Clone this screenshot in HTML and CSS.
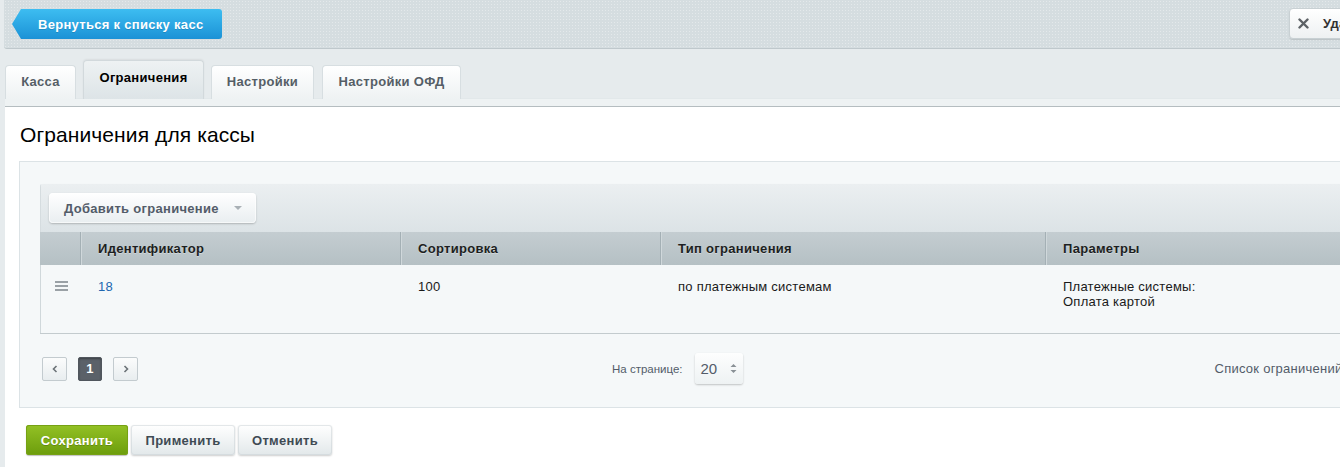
FILE: index.html
```html
<!DOCTYPE html>
<html lang="ru">
<head>
<meta charset="utf-8">
<title>Ограничения для кассы</title>
<link rel="stylesheet" href="styles.css">
</head>
<body>
<div class="page">
  <div class="topbar">
    <a class="back-btn" href="#">Вернуться к списку касс</a>
    <a class="del-btn" href="#"><span class="del-x">
      <svg width="11" height="11" viewBox="0 0 11 11"><path d="M1.5 1.5 L9.5 9.5 M9.5 1.5 L1.5 9.5" stroke="#5d6266" stroke-width="2.4" stroke-linecap="round"/></svg>
    </span>Удалить</a>
  </div>

  <div class="tabs">
    <div class="tab t1">Касса</div>
    <div class="tab tab-active t2">Ограничения</div>
    <div class="tab t3">Настройки</div>
    <div class="tab t4">Настройки ОФД</div>
  </div>
  <div class="tab-strip"></div>

  <div class="panel">
    <h1 class="title">Ограничения для кассы</h1>
    <div class="box">
      <div class="grid">
        <div class="grid-toolbar">
          <button class="add-btn">Добавить ограничение <span class="caret"></span></button>
        </div>
        <div class="grid-head">
          <div class="cell c0"></div>
          <div class="cell c1">Идентификатор</div>
          <div class="cell c2">Сортировка</div>
          <div class="cell c3">Тип ограничения</div>
          <div class="cell c4">Параметры</div>
        </div>
        <div class="grid-row">
          <div class="cell c0"><span class="burger"><i></i><i></i><i></i></span></div>
          <div class="cell c1"><a class="link" href="#">18</a></div>
          <div class="cell c2">100</div>
          <div class="cell c3">по платежным системам</div>
          <div class="cell c4">Платежные системы:<br>Оплата картой</div>
        </div>
      </div>
      <div class="pager-row">
        <div class="pager">
          <span class="pbtn">
            <svg width="6" height="8" viewBox="0 0 6 8"><path d="M4.5 1 L1.5 4 L4.5 7" fill="none" stroke="#6b7277" stroke-width="1.6"/></svg>
          </span>
          <span class="pbtn pbtn-active">1</span>
          <span class="pbtn">
            <svg width="6" height="8" viewBox="0 0 6 8"><path d="M1.5 1 L4.5 4 L1.5 7" fill="none" stroke="#6b7277" stroke-width="1.6"/></svg>
          </span>
        </div>
        <div class="per-page">
          <span class="per-label">На странице:</span>
          <span class="select">20
            <svg class="updown" width="7" height="11" viewBox="0 0 7 11"><path d="M0.5 4 L3.5 1 L6.5 4 Z M0.5 7 L3.5 10 L6.5 7 Z" fill="#8a9196"/></svg>
          </span>
        </div>
        <div class="list-name">Список ограничений</div>
      </div>
    </div>
    <div class="actions">
      <button class="btn btn-green">Сохранить</button>
      <button class="btn">Применить</button>
      <button class="btn">Отменить</button>
    </div>
  </div>
</div>
</body>
</html>
```

FILE: styles.css
```css
html, body {
  margin: 0;
  padding: 0;
  overflow: hidden;
}
body {
  background: #e6ebed;
  font-family: "Liberation Sans", Arial, sans-serif;
  font-size: 13px;
  letter-spacing: 0.25px;
  color: #000;
}
.page {
  width: 1400px;
}

/* top bar */
.topbar {
  margin-left: 4px;
  height: 49px;
  box-sizing: border-box;
  border-bottom: 1px solid #bfc8cc;
  border-bottom-left-radius: 3px;
  background-color: #d5dde0;
  background-image: radial-gradient(rgba(255,255,255,0.35) 0.6px, transparent 0.8px);
  background-size: 3px 3px;
  display: flex;
  align-items: flex-start;
  justify-content: space-between;
  padding: 9px 11px 0 8px;
}
.back-btn {
  display: flex;
  align-items: center;
  height: 30px;
  width: 210px;
  box-sizing: border-box;
  padding-left: 26px;
  color: #fff;
  font-weight: bold;
  font-size: 13px;
  letter-spacing: 0.3px;
  text-decoration: none;
  background: linear-gradient(#3dbdf1, #1b92d6);
  border-radius: 0 3px 3px 0;
  clip-path: polygon(9px 0, 100% 0, 100% 100%, 9px 100%, 0 50%);
  text-shadow: 0 1px 0 rgba(0,0,0,0.15);
}
.del-btn {
  display: flex;
  align-items: center;
  margin-top: -1px;
  height: 31px;
  width: 100px;
  box-sizing: border-box;
  padding-left: 8px;
  background: linear-gradient(#ffffff, #eef1f2);
  border: 1px solid #c8d0d3;
  border-radius: 4px;
  box-shadow: 0 1px 1px rgba(0,0,0,0.12);
  color: #333;
  font-weight: bold;
  font-size: 13px;
  letter-spacing: 0.3px;
  text-decoration: none;
}
.del-x {
  display: flex;
  width: 11px;
  height: 11px;
  margin-right: 14px;
}

/* tabs */
.tabs {
  display: flex;
  align-items: flex-end;
  height: 50px;
  padding-left: 5px;
  gap: 7px;
}
.tab {
  height: 34px;
  box-sizing: border-box;
  display: flex;
  align-items: center;
  justify-content: center;
  padding: 0 0 2px;
  font-weight: bold;
  font-size: 13px;
  letter-spacing: 0.3px;
  color: #555e66;
  background: linear-gradient(#ffffff, #eef2f3);
  border: 1px solid #d7dee1;
  border-bottom: none;
  border-radius: 4px 4px 0 0;
}
.t1 { width: 71px; }
.t2 { width: 121px; }
.t3 { width: 103px; margin-right: 1px; }
.t4 { width: 139px; }
.tab-active {
  height: 39px;
  padding: 0 0 6px;
  color: #000;
  background: linear-gradient(#eef2f3, #dde4e7);
  border-color: #d2d9dc;
  box-shadow: 0 -1px 2px rgba(0,0,0,0.06);
}
.tab-strip {
  margin-left: 5px;
  height: 7px;
  background: #eef2f3;
  border-top: 1px solid #e2e8ea;
  box-sizing: content-box;
  border-bottom: 1px solid #b5bdc0;
  margin-top: -1px;
}

/* panel */
.panel {
  margin-left: 5px;
  background: #fff;
  padding: 16px 0 40px 14px;
}
.title {
  margin: 0 0 14px;
  font-size: 21px;
  line-height: 24px;
  font-weight: normal;
  letter-spacing: 0.1px;
  color: #000;
  padding-left: 1px;
}
.box {
  background: #f5f8f9;
  border: 1px solid #dce3e6;
  border-right: none;
  padding: 21px 0 23px 20px;
}

/* grid */
.grid {
  border-radius: 4px 0 0 0;
  overflow: hidden;
  border-bottom: 1px solid #c3cbce;
}
.grid-toolbar {
  height: 49px;
  box-sizing: border-box;
  padding: 9px 0 0 8px;
  background: linear-gradient(#ebeff1, #dce3e6);
  border-top: 1px solid #f4f7f8;
  border-left: 1px solid #d5dcdf;
}
.add-btn {
  display: flex;
  align-items: center;
  height: 30px;
  width: 207px;
  padding: 0 0 0 15px;
  font-family: inherit;
  font-weight: bold;
  font-size: 13px;
  letter-spacing: 0.3px;
  color: #535c69;
  background: linear-gradient(#ffffff, #e9eef0);
  border: none;
  border-radius: 4px;
  box-shadow: 0 1px 2px rgba(0,0,0,0.22), inset 0 0 0 1px rgba(255,255,255,0.6);
}
.caret {
  width: 0;
  height: 0;
  margin-left: 15px;
  border-left: 4px solid transparent;
  border-right: 4px solid transparent;
  border-top: 4px solid #a9b0b5;
}
.grid-head, .grid-row {
  display: flex;
}
.grid-head {
  height: 33px;
  background: linear-gradient(#c4cdd1, #b5c0c4);
  font-weight: bold;
  letter-spacing: 0.3px;
  color: #1d1f21;
  text-shadow: 0 1px 0 rgba(255,255,255,0.35);
}
.grid-head .cell {
  display: flex;
  align-items: center;
  border-right: 1px solid #a4b0b5;
  box-shadow: 1px 0 0 #d0d8db;
}
.cell {
  box-sizing: border-box;
  padding-left: 17px;
}
.c0 { width: 41px; padding-left: 0; }
.c1 { width: 320px; }
.c2 { width: 260px; }
.c3 { width: 385px; }
.c4 { flex: 1; }
.grid-head .c4 { border-right: none; box-shadow: none; }
.grid-row {
  height: 68px;
  box-sizing: border-box;
  background: #f5f8f9;
  border-left: 1px solid #d0d8db;
  line-height: 15px;
  color: #1a1a1a;
}
.grid-row .cell {
  padding-top: 14px;
}
.grid-row .c0 { width: 40px; display: flex; justify-content: center; padding-top: 16px; padding-left: 1px; }
.burger {
  display: flex;
  flex-direction: column;
  gap: 2px;
  width: 13px;
}
.burger i {
  display: block;
  height: 2px;
  background: #9aa1a6;
}
.link {
  color: #2067b0;
  text-decoration: none;
}

/* pager */
.pager-row {
  display: flex;
  align-items: center;
  height: 31px;
  margin-top: 19px;
}
.pager {
  display: flex;
  gap: 10px;
  margin-left: 2px;
}
.pbtn {
  width: 25px;
  height: 24px;
  box-sizing: border-box;
  display: flex;
  align-items: center;
  justify-content: center;
  border: 1px solid #c3cbcf;
  border-radius: 2px;
  background: linear-gradient(#fbfcfc, #e8edef);
}
.pbtn + .pbtn { margin-left: 1px; }
.pbtn-active {
  width: 24px;
  background: #5b6169;
  border-color: #50565d;
  color: #fff;
  font-weight: bold;
  font-size: 13px;
  box-shadow: inset 0 1px 2px rgba(0,0,0,0.35);
}
.per-page {
  display: flex;
  align-items: center;
  margin-left: 474px;
}
.per-label {
  font-size: 11.5px;
  letter-spacing: 0;
  color: #535c69;
  margin-right: 12px;
}
.select {
  display: flex;
  align-items: center;
  width: 48px;
  height: 31px;
  box-sizing: border-box;
  padding-left: 6px;
  font-size: 15px;
  letter-spacing: 0;
  color: #535c69;
  background: linear-gradient(#fdfefe, #eef2f3);
  border-radius: 3px;
  box-shadow: 0 1px 2px rgba(0,0,0,0.22);
}
.updown { margin-left: 13px; }
.list-name {
  margin-left: 472px;
  font-size: 13px;
  color: #535c69;
  white-space: nowrap;
}

/* actions */
.actions {
  display: flex;
  gap: 3px;
  margin: 17px 0 0 7px;
}
.btn {
  height: 30px;
  box-sizing: border-box;
  padding: 0;
  font-family: inherit;
  font-weight: bold;
  font-size: 13px;
  letter-spacing: 0.3px;
  color: #3f4b54;
  background: linear-gradient(#ffffff, #e2e8ea);
  border: none;
  border-radius: 3px;
  box-shadow: 0 1px 2px rgba(0,0,0,0.2), inset 0 0 0 1px rgba(200,208,211,0.5);
}
.btn-green {
  width: 102px;
  color: #fff;
  background: linear-gradient(#93c125, #6c9d0c);
  box-shadow: 0 1px 1px rgba(0,0,0,0.25), inset 0 0 0 1px #76a114;
  text-shadow: 0 1px 0 rgba(0,0,0,0.2);
}
.actions .btn:nth-child(2) { width: 104px; }
.actions .btn:nth-child(3) { width: 94px; }
```
